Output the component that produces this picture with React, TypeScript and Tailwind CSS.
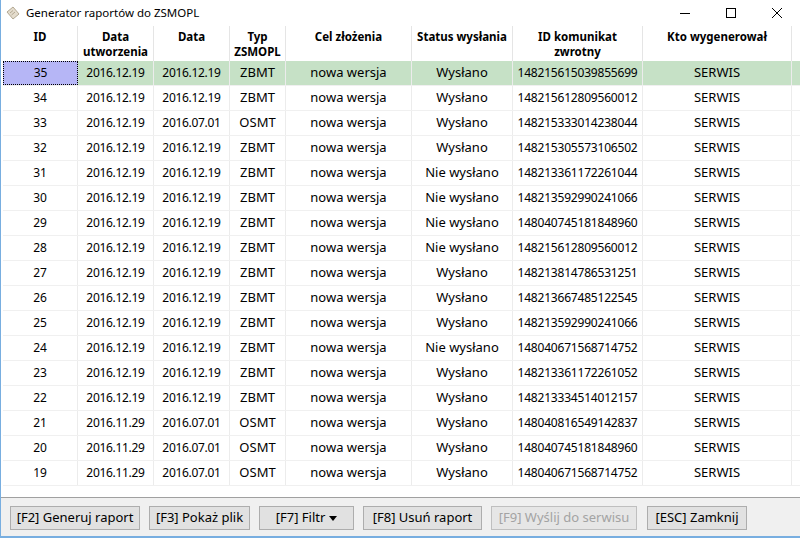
const cols = [
  { w: 'w-[75px]', label: ['ID'], txt: 'text-[12px]' },
  { w: 'w-[76px]', label: ['Data', 'utworzenia'], txt: 'text-[12px] tracking-[-0.3px]' },
  { w: 'w-[76px]', label: ['Data'], txt: 'text-[12px] tracking-[-0.3px]' },
  { w: 'w-[56px]', label: ['Typ', 'ZSMOPL'], txt: 'text-[13px]' },
  { w: 'w-[126px]', label: ['Cel złożenia'], txt: 'text-[13px]' },
  { w: 'w-[101px]', label: ['Status wysłania'], txt: 'text-[13px]' },
  { w: 'w-[130px]', label: ['ID komunikat', 'zwrotny'], txt: 'text-[12px] tracking-[-0.2px]' },
  { w: 'w-[149px]', label: ['Kto wygenerował'], txt: 'text-[13px]' },
];

const rows: [number, string, string, string, string, string][] = [
  [35, '2016.12.19', '2016.12.19', 'ZBMT', 'Wysłano', '148215615039855699'],
  [34, '2016.12.19', '2016.12.19', 'ZBMT', 'Wysłano', '148215612809560012'],
  [33, '2016.12.19', '2016.07.01', 'OSMT', 'Wysłano', '148215333014238044'],
  [32, '2016.12.19', '2016.12.19', 'ZBMT', 'Wysłano', '148215305573106502'],
  [31, '2016.12.19', '2016.12.19', 'ZBMT', 'Nie wysłano', '148213361172261044'],
  [30, '2016.12.19', '2016.12.19', 'ZBMT', 'Nie wysłano', '148213592990241066'],
  [29, '2016.12.19', '2016.12.19', 'ZBMT', 'Nie wysłano', '148040745181848960'],
  [28, '2016.12.19', '2016.12.19', 'ZBMT', 'Nie wysłano', '148215612809560012'],
  [27, '2016.12.19', '2016.12.19', 'ZBMT', 'Wysłano', '148213814786531251'],
  [26, '2016.12.19', '2016.12.19', 'ZBMT', 'Wysłano', '148213667485122545'],
  [25, '2016.12.19', '2016.12.19', 'ZBMT', 'Wysłano', '148213592990241066'],
  [24, '2016.12.19', '2016.12.19', 'ZBMT', 'Nie wysłano', '148040671568714752'],
  [23, '2016.12.19', '2016.12.19', 'ZBMT', 'Wysłano', '148213361172261052'],
  [22, '2016.12.19', '2016.12.19', 'ZBMT', 'Wysłano', '148213334514012157'],
  [21, '2016.11.29', '2016.07.01', 'OSMT', 'Wysłano', '148040816549142837'],
  [20, '2016.11.29', '2016.07.01', 'OSMT', 'Wysłano', '148040745181848960'],
  [19, '2016.11.29', '2016.07.01', 'OSMT', 'Wysłano', '148040671568714752'],
];

function AppIcon() {
  return (
    <svg width="16" height="16" viewBox="0 0 16 16">
      <polygon points="2,7 8,2 14,9 8,14" fill="#e4dccd" stroke="#b3a892" strokeWidth="1" />
      <line x1="5" y1="8" x2="8" y2="5.5" stroke="#b3a892" />
      <line x1="6.5" y1="10" x2="10" y2="7" stroke="#b3a892" />
    </svg>
  );
}

function TitleBar() {
  return (
    <div className="flex h-[26px] items-center bg-white">
      <div className="ml-[4px] flex w-[20px] items-center">
        <AppIcon />
      </div>
      <span className="ml-[1px] text-[11.5px] text-black">Generator raportów do ZSMOPL</span>
      <div className="ml-auto flex h-full items-center">
        <div className="flex w-[46px] justify-center">
          <svg width="10" height="10" viewBox="0 0 10 10">
            <line x1="0" y1="5.5" x2="10" y2="5.5" stroke="#000" strokeWidth="1" />
          </svg>
        </div>
        <div className="flex w-[46px] justify-center">
          <svg width="10" height="10" viewBox="0 0 10 10">
            <rect x="0.5" y="0.5" width="9" height="9" fill="none" stroke="#000" strokeWidth="1" />
          </svg>
        </div>
        <div className="flex w-[46px] justify-center">
          <svg width="10" height="10" viewBox="0 0 10 10">
            <path d="M0 0 L10 10 M10 0 L0 10" stroke="#000" strokeWidth="1" />
          </svg>
        </div>
      </div>
    </div>
  );
}

function Btn({ children, w, disabled }: { children: React.ReactNode; w: string; disabled?: boolean }) {
  return (
    <div
      className={`flex h-[24px] shrink-0 ${w} items-center justify-center border text-[13px] ${
        disabled ? 'border-[#bfbfbf] bg-[#e6e6e6] text-[#a3a3a3]' : 'border-[#adadad] bg-[#e1e1e1] text-black'
      }`}
    >
      {children}
    </div>
  );
}

export default function App() {
  return (
    <div className="flex h-[538px] w-[800px] flex-col overflow-hidden border-l border-[#78aee0] bg-white font-['Noto_Sans',sans-serif]">
      <TitleBar />
      <div className="flex flex-1 flex-col pl-[2px]">
        <div className="flex h-[35px]">
          {cols.map((c, i) => (
            <div key={i} className={`${c.w} shrink-0 border-r border-[#e5e5e5] pt-[3px] text-center text-[11.5px] font-bold leading-[15px] text-black`}>
              {c.label.map((l) => (
                <div key={l}>{l}</div>
              ))}
            </div>
          ))}
          <div className="flex-1" />
        </div>
        {rows.map((r, ri) => {
          const sel = ri === 0;
          const cells = [String(r[0]), r[1], r[2], r[3], 'nowa wersja', r[4], r[5], 'SERWIS'];
          return (
            <div key={r[0]} className={`flex h-[25px] border-b border-[#f0f0f0] ${sel ? 'bg-[#c6e1c6]' : ''}`}>
              {cells.map((t, ci) => (
                <div
                  key={ci}
                  className={`${cols[ci].w} ${cols[ci].txt} flex shrink-0 items-center justify-center text-black ${
                    sel && ci === 0 ? 'border border-dotted border-black bg-[#b6b6f6]' : 'border-r border-[#ececec]'
                  }`}
                >
                  {t}
                </div>
              ))}
              <div className="flex-1" />
            </div>
          );
        })}
        <div className="flex-1" />
      </div>
      <div className="flex h-[39px] border-t border-[#a0a0a0] bg-[#f0f0f0] pt-[8px] pl-[9px]">
        <Btn w="w-[130px]">[F2] Generuj raport</Btn>
        <div className="ml-[9px]">
          <Btn w="w-[101px]">[F3] Pokaż plik</Btn>
        </div>
        <div className="ml-[9px]">
          <Btn w="w-[95px]">
            <span>[F7] Filtr</span>
            <svg width="8" height="5" viewBox="0 0 8 5" className="ml-[4px]">
              <polygon points="0,0 8,0 4,5" fill="#000" />
            </svg>
          </Btn>
        </div>
        <div className="ml-[9px]">
          <Btn w="w-[119px]">[F8] Usuń raport</Btn>
        </div>
        <div className="ml-[9px]">
          <Btn w="w-[146px]" disabled>
            [F9] Wyślij do serwisu
          </Btn>
        </div>
        <div className="ml-[10px]">
          <Btn w="w-[100px]">[ESC] Zamknij</Btn>
        </div>
      </div>
      <div className="h-[2px] bg-[#78aee0]" />
    </div>
  );
}
